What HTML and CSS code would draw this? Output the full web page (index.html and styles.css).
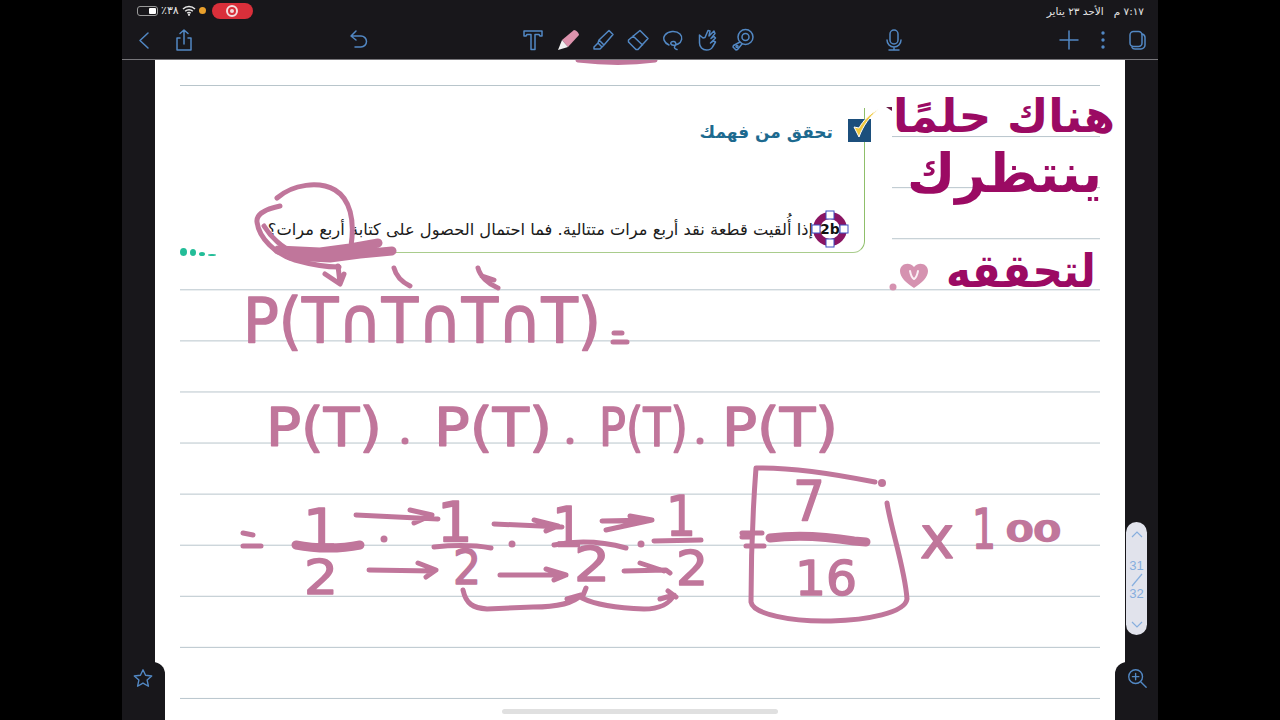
FILE: index.html
```html
<!DOCTYPE html>
<html lang="ar">
<head>
    <meta charset="UTF-8">
    <meta name="viewport" content="width=device-width, initial-scale=1.0">
    <title>تحقق من فهمك</title>
    <link rel="stylesheet" href="styles.css">
</head>
<body>
    <div class="app">
        <div class="topbar">
            <div class="status" dir="ltr">
                <div class="status-left">
                    <div class="battery"><span class="battery-fill"></span></div>
                    <span class="status-text">٪٣٨</span>
                    <svg class="wifi" width="14" height="11" viewBox="0 0 14 11"><path d="M1 4a8.5 8.5 0 0 1 12 0M3.2 6.2a5.4 5.4 0 0 1 7.6 0M5.3 8.2a2.4 2.4 0 0 1 3.4 0" fill="none" stroke="#e8e8e8" stroke-width="1.5"/><circle cx="7" cy="9.8" r="1.1" fill="#e8e8e8"/></svg>
                    <span class="dot-orange"></span>
                    <div class="record"><span class="record-mark"></span></div>
                </div>
                <span class="status-text status-right" dir="rtl">٧:١٧ م &nbsp; الأحد ٢٣ يناير</span>
            </div>
            <div class="toolbar" dir="ltr">
                <div class="tb-group tb-nav">
                    <svg class="icon" viewBox="0 0 24 24"><path d="M16 5l-8 7.5 8 7.5"/></svg>
                    <svg class="icon" viewBox="0 0 24 24"><path d="M8 10H5v12h14V10h-3M12 16V2M8 5.500L12 2l4 3.500"/></svg>
                </div>
                <div class="tb-group tb-undo">
                    <svg class="icon" viewBox="0 0 24 24"><path d="M10 3L5 8l5 4M5 8h10a5 5 0 0 1 0 11h-6"/></svg>
                </div>
                <div class="tb-group tb-tools">
                    <svg class="icon" viewBox="0 0 24 24"><path d="M3 3h18v5h-2l-1-1.5h-4v15h-4v-15H6L5 8H3z"/></svg>
                    <svg class="icon" viewBox="0 0 24 24"><path class="pen-body" d="M6 12L18 2c2 0 5 3 5 5L12 19z"/><path class="pen-tip" d="M6 12l6 7-10 3z"/></svg>
                    <svg class="icon" viewBox="0 0 24 24"><path d="M8 12L18 2.500l4 4L13 17zM8 12l-1 3-4 4v2h6l2-2 2-2M7 15l4 4"/></svg>
                    <svg class="icon" viewBox="0 0 24 24"><path d="M14 2.500l8 8-10 11h-2L2.500 14v-2zM7 8l9.500 9"/></svg>
                    <svg class="icon" viewBox="0 0 24 24"><path d="M8 17C3 15 1.500 10 4 7c3-4 11-5 15-1 3 3 2 8-2 10-3 1.500-6 1.500-7 0s1-3 3-2.500 2.500 3 1 4.500 0 3 2 3.500"/></svg>
                    <svg class="icon" viewBox="0 0 24 24"><path d="M7 10L3.500 7v8c0 4 3 7 7 7 3 0 5-1 6-3l3-5-2-1-3 2 5-5-1.500-1.500-3 2 4-5L18 3l-5 5 1-5-2-.5-3 7z"/></svg>
                    <svg class="icon" viewBox="0 0 24 24"><circle cx="14.500" cy="9" r="7.500"/><circle cx="14.500" cy="9" r="3.500"/><path d="M9 14l-6.500 3.500-.5 1.500 3 3 1.500-.5L11 16"/><circle cx="6" cy="18.500" r="1"/></svg>
                </div>
                <div class="tb-group tb-mic">
                    <svg class="icon" viewBox="0 0 24 24"><rect x="8" y="2" width="8" height="14" rx="4"/><path d="M5 12a7 7 0 0 0 14 0M12 19v3M7 22h10"/></svg>
                </div>
                <div class="tb-group tb-right">
                    <svg class="icon" viewBox="0 0 24 24"><path d="M12 3v18M3 12h18"/></svg>
                    <svg class="icon icon-fill" viewBox="0 0 24 24"><circle cx="12" cy="5" r="1.700"/><circle cx="12" cy="12" r="1.700"/><circle cx="12" cy="19" r="1.700"/></svg>
                    <svg class="icon" viewBox="0 0 24 24"><rect x="5" y="3.500" width="12" height="15" rx="3.500"/><path d="M17 6c2 .5 3 1.500 3 3.500V17c0 2-2 4-4 4H10c-1.500 0-2.500-.5-3-1.500"/></svg>
                </div>
            </div>
        </div>

        <div class="page">
            <div class="sheet"></div>

            <div class="snippet">
                <span class="snippet-corner"></span>
                <div class="frame"></div>
                <div class="snippet-head">
                    <h2 class="snippet-title">تحقق من فهمك</h2>
                    <svg class="check" width="32" height="35" viewBox="0 0 32 35">
                        <rect x="0" y="11" width="23" height="23" fill="#1c4f7c"/>
                        <path d="M6 19l5 10C15 18 22 8 31 1 22 5 15 13 11 20z" fill="#f0c93f" stroke="#fff" stroke-width="1"/>
                    </svg>
                </div>
                <div class="question">
                    <svg class="badge" width="38" height="38" viewBox="0 0 38 38">
                        <circle cx="19" cy="19" r="17" fill="#8a1563"/>
                        <circle cx="19" cy="19" r="10" fill="#fff"/>
                        <text class="badge-text" x="19" y="24" text-anchor="middle">2b</text>
                        <g class="handles">
                            <rect x="15" y="1" width="8" height="8"/>
                            <rect x="15" y="29" width="8" height="8"/>
                            <rect x="1" y="15" width="8" height="8"/>
                            <rect x="29" y="15" width="8" height="8"/>
                        </g>
                    </svg>
                    <p class="question-text">إذا أُلقيت قطعة نقد أربع مرات متتالية. فما احتمال الحصول على كتابة أربع مرات؟</p>
                </div>
                <div class="dots">
                    <span class="dot dot-1"></span>
                    <span class="dot dot-2"></span>
                    <span class="dot dot-3"></span>
                    <span class="dot dot-4"></span>
                </div>
            </div>

            <svg class="ink" width="970" height="660" viewBox="155 60 970 660">
                <path class="pen" d="M578 60c25 3 55 3 77 0"/>

                <!-- the circled words and arrows -->
                <path class="pen" d="M280 206c-14 3-24 8-23 16 2 16 18 32 38 38 18 5 34 7 44 7M264 226c10 16 24 26 42 32M277 198c16-14 42-17 58-8 15 9 20 30 16 56"/>
                <path class="pen-heavy" d="M278 250l42 2 30-4 28-5M290 256l40 2 30-4 32-3"/>
                <path class="pen" d="M338 266l2 17M325 274l15 10 4-10M394 268c2 8 8 14 16 18M478 268c2 8 10 16 20 20M482 276l12 4"/>

                <!-- first row -->
                <text class="ink-text ink-row1" x="243" y="342" textLength="358" lengthAdjust="spacingAndGlyphs">P(T∩T∩T∩T)</text>
                <path class="pen" d="M614 333h8M613 342h14"/>

                <!-- second row -->
                <text class="ink-text ink-row2" x="266" y="446" textLength="116" lengthAdjust="spacingAndGlyphs">P(T)</text>
                <text class="ink-text ink-row2" x="434" y="446" textLength="118" lengthAdjust="spacingAndGlyphs">P(T)</text>
                <text class="ink-text ink-row2" x="599" y="446" textLength="89" lengthAdjust="spacingAndGlyphs">P(T)</text>
                <text class="ink-text ink-row2" x="722" y="446" textLength="116" lengthAdjust="spacingAndGlyphs">P(T)</text>

                <!-- fractions -->
                <path class="pen" d="M243 533l10 2M243 546h18"/>
                <text class="ink-text ink-num" x="303" y="548">1</text>
                <text class="ink-text ink-den" x="304" y="594" textLength="34" lengthAdjust="spacingAndGlyphs">2</text>
                <path class="pen-heavy" d="M296 545c20 4 45 4 64 0"/>
                <text class="ink-text ink-num" x="437" y="541">1</text>
                <text class="ink-text ink-den" x="453" y="584" textLength="28" lengthAdjust="spacingAndGlyphs">2</text>
                <path class="pen" d="M434 547c20-2 40-2 57 1"/>
                <text class="ink-text ink-num" x="552" y="546" textLength="32" lengthAdjust="spacingAndGlyphs">1</text>
                <text class="ink-text ink-den" x="574" y="581" textLength="36" lengthAdjust="spacingAndGlyphs">2</text>
                <path class="pen" d="M554 545c25-5 50-3 72 3"/>
                <text class="ink-text ink-num" x="666" y="535" textLength="30" lengthAdjust="spacingAndGlyphs">1</text>
                <text class="ink-text ink-den" x="676" y="585" textLength="32" lengthAdjust="spacingAndGlyphs">2</text>
                <path class="pen" d="M654 541l47-1"/>

                <g class="ink-dots">
                    <circle cx="405" cy="441" r="3.500"/>
                    <circle cx="570" cy="441" r="3.500"/>
                    <circle cx="700" cy="441" r="3.500"/>
                    <circle cx="384" cy="539" r="3.500"/>
                    <circle cx="512" cy="544" r="3.500"/>
                    <circle cx="641" cy="544" r="3.500"/>
                </g>

                <path class="pen" d="M356 515l82 4M410 510l22 5-18 8M369 570l64 1M418 563l18 7-10 7M494 524l68 3M534 520l24 6-12 5M602 521l50-1M606 530l46-10-22-4M500 575l66 0M546 569l20 6-12 5M624 571l42-1 4 3M640 563l24 8"/>
                <path class="pen" d="M463 590c3 14 10 18 24 19l46-2c22 0 40-3 48-12l-14 4M586 588l-4 10c12 6 34 10 62 11 16 0 26-6 30-14l-14 4M668 591l8 6"/>

                <!-- boxed answer -->
                <path class="pen" d="M875 482c-40-8-86-15-119-14-3 40-5 90-5 134 2 12 40 20 80 19 36-1 74-8 76-22-2-30-16-70-20-96"/>
                <circle class="ink-spot" cx="882" cy="483" r="4"/>
                <path class="pen" d="M742 533h20M746 546h18M750 537h-8"/>
                <path class="pen-heavy" d="M770 538c30-4 60-1 84 3l12 1"/>
                <text class="ink-text ink-num" x="793" y="520" textLength="32" lengthAdjust="spacingAndGlyphs">7</text>
                <text class="ink-text ink-den" x="795" y="595" textLength="62" lengthAdjust="spacingAndGlyphs">16</text>
                <text class="ink-text ink-x" x="920" y="558">x</text>
                <text class="ink-text ink-hundred" x="972" y="548" textLength="24" lengthAdjust="spacingAndGlyphs">1</text>
                <text class="ink-text ink-zeros" x="1006" y="541" textLength="55" lengthAdjust="spacingAndGlyphs">00</text>

                <!-- right side note -->
                <text class="note" x="893" y="132" textLength="222" lengthAdjust="spacingAndGlyphs">هناك حلمًا</text>
                <text class="note note-tall" x="907" y="192" textLength="195" lengthAdjust="spacingAndGlyphs">ينتظرك</text>
                <text class="note" x="946" y="287" textLength="150" lengthAdjust="spacingAndGlyphs">لتحققه</text>
                <path class="heart" d="M914 288c-8-5-14-11-14-17 0-7 9-10 14-4 5-6 14-3 14 4 0 6-6 12-14 17z"/>
                <path class="heart-mark" d="M910 271c1 5 2 7 4 8 2-1 3-3 4-8"/>
                <circle class="heart-dot" cx="893" cy="287" r="3.500"/>
            </svg>

            <div class="home-bar"></div>
        </div>

        <div class="pager">
            <svg class="pager-arrow" width="14" height="8" viewBox="0 0 14 8"><path d="M2 7l5-5 5 5"/></svg>
            <div class="pager-count">
                <span>31</span>
                <svg width="14" height="14" viewBox="0 0 14 14"><path class="pager-slash" d="M2 13L12 1"/></svg>
                <span>32</span>
            </div>
            <svg class="pager-arrow" width="14" height="8" viewBox="0 0 14 8"><path d="M2 1l5 5 5-5"/></svg>
        </div>

        <div class="corner corner-left">
            <svg class="icon icon-corner" viewBox="0 0 24 24"><path d="M12 3l2.800 6 6.700.8-5 4.500 1.400 6.700-5.900-3.500L6.100 21l1.400-6.700-5-4.500 6.700-.8z"/></svg>
        </div>
        <div class="corner corner-right">
            <svg class="icon icon-corner" viewBox="0 0 24 24"><circle cx="10.500" cy="10.500" r="7.500"/><path d="M16 16l6 6M10.500 7v7M7 10.500h7"/></svg>
        </div>
    </div>
</body>
</html>
```

FILE: styles.css
```css
html, body {
    margin: 0;
    padding: 0;
    height: 100%;
    background-color: #000;
    overflow: hidden;
}
.app {
    position: relative;
    width: 1036px;
    height: 720px;
    margin-left: 122px;
    display: flex;
    flex-direction: column;
    background-color: #18171b;
    font-family: "DejaVu Sans", sans-serif;
}
.topbar {
    height: 60px;
    flex-shrink: 0;
    display: flex;
    flex-direction: column;
    border-bottom: 1px solid #77767a;
    box-sizing: border-box;
}
.status {
    height: 20px;
    display: flex;
    align-items: center;
    justify-content: space-between;
    padding: 1px 14px 0 15px;
    box-sizing: border-box;
}
.status-left {
    display: flex;
    align-items: center;
    gap: 3px;
}
.status-text {
    font-size: 11px;
    color: #e4e4e4;
}
.status-right {
    font-size: 10.5px;
}
.battery {
    width: 21px;
    height: 10px;
    border: 1px solid #9a9a9a;
    border-radius: 3px;
    display: flex;
    justify-content: flex-end;
    padding: 1px;
    box-sizing: border-box;
}
.battery-fill {
    width: 7px;
    background-color: #fff;
    border-radius: 1px;
}
.dot-orange {
    width: 7px;
    height: 7px;
    border-radius: 50%;
    background-color: #e9a02c;
}
.record {
    width: 41px;
    height: 16px;
    margin-left: 3px;
    border-radius: 8px;
    background-color: #d92f3a;
    display: flex;
    align-items: center;
    justify-content: center;
}
.record-mark {
    width: 4px;
    height: 4px;
    border: 2px solid #d92f3a;
    outline: 2px solid #f3dede;
    border-radius: 50%;
    background-color: #f3dede;
}
.toolbar {
    flex: 1;
    display: flex;
    align-items: center;
    padding-left: 10px;
}
.tb-group {
    display: flex;
    align-items: center;
}
.tb-nav {
    gap: 16px;
}
.tb-undo {
    margin-left: 150px;
}
.tb-tools {
    margin-left: 151px;
    gap: 11px;
}
.tb-mic {
    margin-left: 127px;
}
.tb-right {
    margin-left: 151px;
    gap: 10px;
}
.icon {
    width: 24px;
    height: 24px;
    fill: none;
    stroke: #5288c4;
    stroke-width: 1.5;
    stroke-linecap: round;
    stroke-linejoin: round;
}
.icon-fill {
    fill: #5288c4;
    stroke: none;
}
.pen-body {
    fill: #dd93ad;
    stroke: none;
}
.pen-tip {
    fill: #f2f2f2;
    stroke: none;
}

/* white sheet and its ruled lines */
.page {
    position: relative;
    flex: 1;
    margin: 0 33px;
    background-color: #fff;
    overflow: hidden;
}
.sheet {
    height: calc(100% - 25px);
    margin: 25px 25px 0;
    background-image: linear-gradient(#b7c4cb 1px, transparent 1px);
    background-size: 100% 51.08px;
}

/* the pasted question from the book */
.snippet {
    position: absolute;
    left: 25px;
    top: 27px;
    width: 712px;
    height: 201px;
    background-color: #fff;
}
.snippet-corner {
    position: absolute;
    right: 0;
    top: 20px;
    width: 0;
    height: 0;
    border-top: 4px solid #6b1c46;
    border-left: 6px solid transparent;
}
.frame {
    position: absolute;
    left: 200px;
    right: 27px;
    top: 21px;
    height: 144px;
    border-right: 1.5px solid #8fbf6a;
    border-bottom: 1.5px solid #a9cc8c;
    border-bottom-right-radius: 12px;
}
.snippet-head {
    position: absolute;
    top: 21px;
    right: 12px;
    display: flex;
    align-items: flex-end;
    gap: 15px;
}
.snippet-title {
    margin: 0 0 1px;
    font-size: 17px;
    font-weight: bold;
    color: #1d6a8f;
}
.check {
    display: block;
}
.question {
    position: absolute;
    top: 123px;
    right: 43px;
    display: flex;
    align-items: center;
    flex-direction: row-reverse;
    direction: ltr;
}
.question-text {
    margin: 0 -2px 0 0;
    width: 544px;
    font-size: 16.3px;
    color: #1b1b1b;
    white-space: nowrap;
    direction: rtl;
}
.badge {
    display: block;
}
.badge-text {
    font-size: 14px;
    font-weight: bold;
    fill: #111;
}
.handles rect {
    fill: #fff;
    stroke: #3d4fc0;
    stroke-width: 1;
}
.dots {
    position: absolute;
    left: 0;
    top: 159px;
    height: 10px;
    display: flex;
    align-items: flex-end;
    gap: 3px;
}
.dot {
    background-color: #23bd98;
    border-radius: 50%;
}
.dot-1 { width: 7px; height: 8px; }
.dot-2 { width: 6px; height: 7px; }
.dot-3 { width: 6px; height: 4px; }
.dot-4 { width: 8px; height: 2px; }

/* handwriting laid over the sheet */
.ink {
    position: absolute;
    left: 0;
    top: 0;
}
.pen, .pen-heavy {
    fill: none;
    stroke: #c0769b;
    stroke-width: 5;
    stroke-linecap: round;
    stroke-linejoin: round;
}
.pen-heavy {
    stroke-width: 9;
}
.ink-spot, .ink-dots circle {
    fill: #c0769b;
}
.ink-text {
    font-family: "DejaVu Sans", sans-serif;
    fill: #c0769b;
    stroke: #c0769b;
    stroke-width: 1.5;
    stroke-linejoin: round;
}
.ink-row1 { font-size: 62px; }
.ink-row2 { font-size: 54px; }
.ink-num { font-size: 56px; }
.ink-den { font-size: 48px; }
.ink-x { font-size: 58px; }
.ink-hundred { font-size: 56px; }
.ink-zeros { font-size: 26px; stroke-width: 2.5; }
.note {
    font-family: "DejaVu Sans", sans-serif;
    font-size: 46px;
    font-weight: bold;
    fill: #9b0a63;
}
.note-tall {
    font-size: 54px;
}
.heart {
    fill: #d592b0;
}
.heart-mark {
    fill: none;
    stroke: #fbeef4;
    stroke-width: 2;
    stroke-linecap: round;
}
.heart-dot {
    fill: #d592b0;
}
.home-bar {
    position: absolute;
    left: 347px;
    bottom: 6px;
    width: 276px;
    height: 5px;
    border-radius: 3px;
    background-color: #e0e0e0;
}

/* overlays on the dark frame */
.pager {
    position: absolute;
    left: 1004px;
    top: 522px;
    width: 21px;
    height: 113px;
    box-sizing: border-box;
    padding: 8px 0 6px;
    border-radius: 11px;
    background-color: #e1e3ec;
    display: flex;
    flex-direction: column;
    align-items: center;
    justify-content: space-between;
}
.pager-arrow path, .pager-slash {
    fill: none;
    stroke: #86aede;
    stroke-width: 1.2;
}
.pager-count {
    display: flex;
    flex-direction: column;
    align-items: center;
    font-family: "Liberation Sans", sans-serif;
    font-size: 13px;
    line-height: 14px;
    color: #86aede;
}
.corner {
    position: absolute;
    top: 662px;
    bottom: 0;
    width: 43px;
    display: flex;
    justify-content: center;
    background-color: #18171b;
    padding-top: 5px;
    box-sizing: border-box;
}
.corner-left {
    left: 0;
    border-top-right-radius: 12px;
    padding-right: 2px;
}
.corner-right {
    right: 0;
    border-top-left-radius: 12px;
    padding-left: 1px;
}
.icon-corner {
    width: 22px;
    height: 22px;
}
```
